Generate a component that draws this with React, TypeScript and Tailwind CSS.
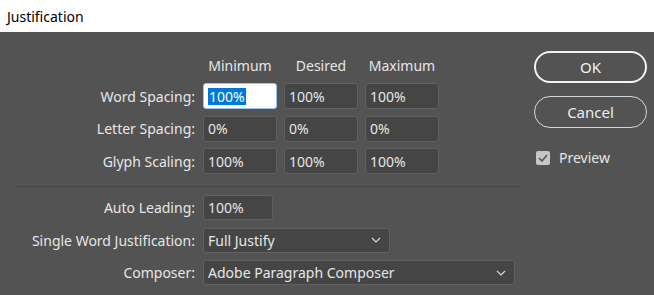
import React from 'react';

const font = { fontFamily: '"Noto Sans", "Open Sans", sans-serif' };

const Field = ({ value, w = 'w-[74px]', selected = false }: { value: string; w?: string; selected?: boolean }) => (
  <div
    className={`${w} h-[26px] flex items-center pl-[4px] rounded-[3px] border text-[14px] ${
      selected ? 'bg-white border-[#9cc3ea]' : 'bg-[#454545] border-[#606060] text-[#e6e6e6]'
    }`}
  >
    {selected ? <span className="bg-[#0078d7] text-white leading-[17px] px-[1px]">{value}</span> : value}
  </div>
);

const Select = ({ value, w }: { value: string; w: string }) => (
  <div className={`${w} h-[25px] flex items-center justify-between pl-[4px] pr-[8px] rounded-[3px] border bg-[#454545] border-[#606060] text-[#e6e6e6] text-[14px]`}>
    <span>{value}</span>
    <svg width="10" height="6" viewBox="0 0 10 6" fill="none" stroke="#d8d8d8" strokeWidth="1.2">
      <path d="M1 1 L5 5 L9 1" />
    </svg>
  </div>
);

const Label = ({ children }: { children: React.ReactNode }) => (
  <div className="w-[203px] pr-[8px] text-right text-[14px] text-[#e6e6e6] shrink-0">{children}</div>
);

const rows = [
  { label: 'Word Spacing:', values: ['100%', '100%', '100%'] },
  { label: 'Letter Spacing:', values: ['0%', '0%', '0%'] },
  { label: 'Glyph Scaling:', values: ['100%', '100%', '100%'] },
];

export default function App() {
  return (
    <div className="w-[654px] h-[295px] flex flex-col overflow-hidden" style={font}>
      <header className="h-[32px] bg-white flex items-center px-[7px] text-[14px] text-black shrink-0">Justification</header>
      <main className="flex-1 bg-[#535353] flex">
        <section className="w-[520px] pl-[16px]">
          <div className="flex pt-[23px] h-[51px] text-[14px] text-[#e6e6e6]">
            <div className="w-[187px]" />
            <div className="flex gap-[7px]">
              <span className="w-[74px] text-center">Minimum</span>
              <span className="w-[74px] text-center">Desired</span>
              <span className="w-[74px] text-center">Maximum</span>
            </div>
          </div>
          <div className="flex flex-col gap-[6.5px] -ml-[16px]">
            {rows.map((r, i) => (
              <div key={r.label} className="flex items-center">
                <Label>{r.label}</Label>
                <div className="flex gap-[7px]">
                  {r.values.map((v, j) => (
                    <Field key={j} value={v} selected={i === 0 && j === 0} />
                  ))}
                </div>
              </div>
            ))}
          </div>
          <div className="mt-[12px] mb-[8px] border-t border-[#474747] h-0" />
          <div className="flex flex-col gap-[7.5px] -ml-[16px]">
            <div className="flex items-center">
              <Label>Auto Leading:</Label>
              <div className="w-[70px] h-[25px] flex items-center pl-[4px] rounded-[3px] border bg-[#454545] border-[#606060] text-[#e6e6e6] text-[14px]">100%</div>
            </div>
            <div className="flex items-center">
              <Label>Single Word Justification:</Label>
              <Select value="Full Justify" w="w-[187px]" />
            </div>
            <div className="flex items-center">
              <Label>Composer:</Label>
              <Select value="Adobe Paragraph Composer" w="w-[312px]" />
            </div>
          </div>
        </section>
        <aside className="ml-[14px] w-[113px] pt-[19px] flex flex-col">
          <button className="h-[32px] rounded-full border-2 border-[#f2f2f2] text-[#f2f2f2] text-[15px]">OK</button>
          <button className="mt-[13px] h-[32px] rounded-full border border-[#d6d6d6] text-[#ececec] text-[15px]">Cancel</button>
          <label className="mt-[19px] flex items-center gap-[9px] pl-[2px] text-[14px] text-[#e6e6e6]">
            <span className="w-[14px] h-[14px] rounded-[2px] bg-[#c6c6c6] flex items-center justify-center">
              <svg width="10" height="8" viewBox="0 0 10 8" fill="none" stroke="#555" strokeWidth="1.6">
                <path d="M1 4 L4 7 L9 1" />
              </svg>
            </span>
            Preview
          </label>
        </aside>
      </main>
    </div>
  );
}
